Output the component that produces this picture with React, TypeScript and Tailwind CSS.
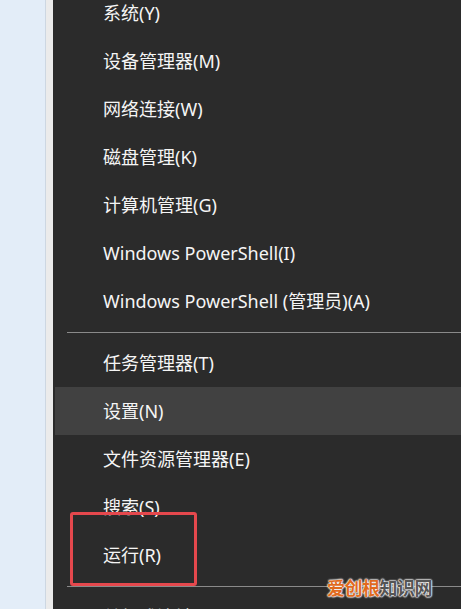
import React from 'react';

type Item = { label: string; active?: boolean } | 'sep';

const items: Item[] = [
  { label: '系统(Y)' },
  { label: '设备管理器(M)' },
  { label: '网络连接(W)' },
  { label: '磁盘管理(K)' },
  { label: '计算机管理(G)' },
  { label: 'Windows PowerShell(I)' },
  { label: 'Windows PowerShell (管理员)(A)' },
  'sep',
  { label: '任务管理器(T)' },
  { label: '设置(N)', active: true },
  { label: '文件资源管理器(E)' },
  { label: '搜索(S)' },
  { label: '运行(R)' },
  'sep',
  { label: '关机或注销(U)' },
];

export default function App() {
  return (
    <div
      className="relative flex h-[609px] w-[461px] overflow-hidden bg-[#e3edf8]"
      style={{ fontFamily: '"Noto Sans", "Noto Sans CJK SC", sans-serif' }}
    >
      <div className="w-[45px] shrink-0" />
      <div className="w-[8px] shrink-0 border-l border-[#cdd7e2] bg-[#ebebeb]" />
      <div className="flex-1 bg-[#2b2b2b] pl-[2px]">
        <div className="-mt-[11px] flex flex-col">
          {items.map((item, i) =>
            item === 'sep' ? (
              <div key={i} className="flex h-[14px] items-center pl-[12px]">
                <div className="h-px w-full bg-[#8a8a8a]" />
              </div>
            ) : (
              <div
                key={i}
                className={`flex h-[48px] items-center whitespace-nowrap pl-[48px] text-[18px] text-[#f5f5f5] ${
                  item.active ? 'bg-[#414141]' : ''
                }`}
              >
                {item.label}
              </div>
            )
          )}
        </div>
      </div>

      {/* highlight box */}
      <div className="absolute left-[70px] top-[512px] h-[74px] w-[127px] rounded-[3px] border-[3px] border-[#e5484d]" />

      {/* watermark */}
      <div
        className="absolute left-[327px] top-[579px] whitespace-nowrap text-[18px] font-bold leading-none tracking-[-0.5px]"
        style={{ textShadow: '0 0 2px #fff, 0 0 2px #fff, 0 0 2px #fff, 0 0 1px #fff' }}
      >
        <span className="text-[#e06a1e]">爱创根</span>
        <span className="text-[#555555]">知识网</span>
      </div>
    </div>
  );
}
